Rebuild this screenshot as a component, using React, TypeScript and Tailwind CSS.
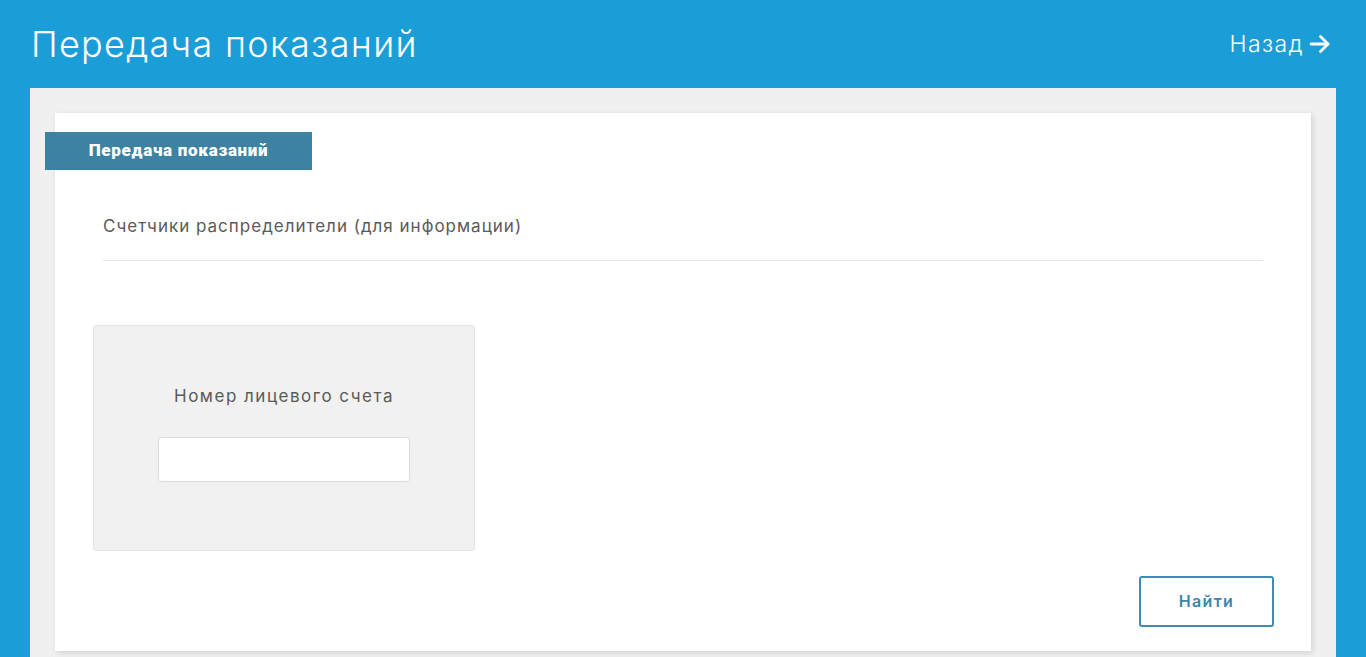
import React from "react";

const font = { fontFamily: "Inter, 'Open Sans', sans-serif" };

const Header = () => (
  <header className="flex h-[88px] items-center justify-between bg-[#1b9ed7] pl-[31px] pr-[34px] text-white">
    <h1 className="text-[36px] font-light tracking-[1.3px]">Передача показаний</h1>
    <a href="#" className="flex items-center gap-[4px] text-[23px] font-light tracking-[1.4px]">
      Назад
      <svg width="24" height="24" viewBox="0 0 24 24" fill="none" stroke="currentColor" strokeWidth="2.8" strokeLinecap="round" strokeLinejoin="round">
        <path d="M3 12h17" />
        <path d="M12.5 4.5 20 12l-7.5 7.5" />
      </svg>
    </a>
  </header>
);

const AccountBox = () => (
  <div className="flex h-[226px] w-[382px] flex-col items-center rounded-[3px] border border-[#e5e5e5] bg-[#f1f1f1] pt-[58px]">
    <label className="text-[17px] tracking-[1.5px] text-[#5a5a5a]">Номер лицевого счета</label>
    <input type="text" className="mt-[28px] h-[45px] w-[252px] rounded-[4px] border border-[#dcdcdc] bg-white px-3 outline-none" />
  </div>
);

const App = () => (
  <div className="h-[657px] overflow-hidden bg-[#1b9ed7]" style={font}>
    <Header />
    <div className="mx-[30px] bg-[#f0f0f0] px-[25px] pt-[25px] pb-[6px]">
      <div className="relative h-[538px] bg-white shadow-[2px_2px_6px_rgba(0,0,0,0.12)]">
        <div className="absolute left-[-10px] top-[19px] flex h-[38px] w-[267px] items-center justify-center bg-[#3e82a2]">
          <span className="text-[17px] font-black tracking-[0.7px] text-white" style={{ fontFamily: "Roboto, sans-serif" }}>
            Передача показаний
          </span>
        </div>
        <div className="px-[48px] pt-[101px]">
          <p className="text-[17px] tracking-[1px] text-[#5a5a5a]">Счетчики распределители (для информации)</p>
          <div className="mt-[20px] h-px bg-[#e4e4e4]" />
        </div>
        <div className="pl-[38px] pt-[64px]">
          <AccountBox />
        </div>
        <div className="flex justify-end pr-[37px] pt-[25px]">
          <button className="h-[51px] w-[135px] rounded-[3px] border-2 border-[#3b8db3] text-[16px] font-semibold tracking-[1.3px] text-[#3b86ad]">
            Найти
          </button>
        </div>
      </div>
    </div>
  </div>
);

export default App;
